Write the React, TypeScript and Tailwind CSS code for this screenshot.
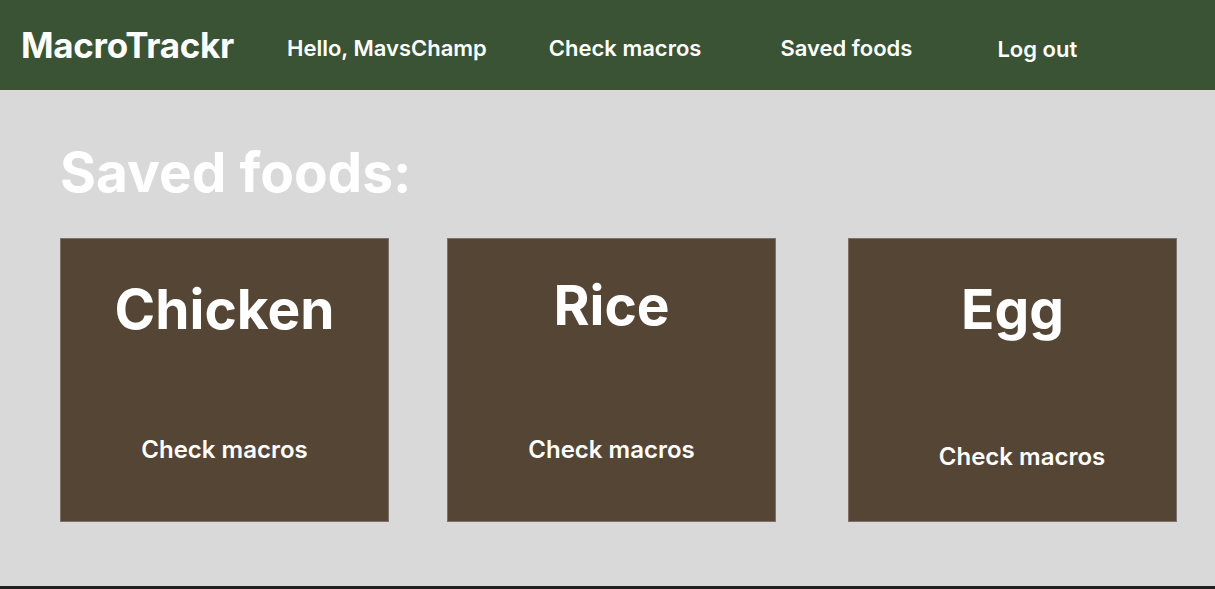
export default function App() {
  const font = { fontFamily: "Inter, 'Noto Sans', sans-serif" };

  return (
    <main className="flex h-[589px] w-full flex-col bg-[#d9d9d9]" style={font}>

      {/* Header */}

      <header className="flex h-[90px] shrink-0 items-center bg-[#3a5335] text-white">

        <div className="ml-[21px] text-[35px] font-bold tracking-[-0.3px]">
          MacroTrackr
        </div>

        <div className="ml-[53px] mt-[6px] text-[22px] font-semibold">
          Hello, MavsChamp
        </div>

        <div className="ml-[62px] mt-[6px] text-[22px] font-semibold">
          Check macros
        </div>

        <div className="ml-[79px] mt-[6px] text-[22px] font-semibold">
          Saved foods
        </div>

        <div className="ml-[85px] mt-[9px] text-[22px] font-semibold">
          Log out
        </div>

      </header>

      {/* Saved foods */}

      <section className="flex-1 pl-[60px]">

        <h1 className="mt-[55px] text-[55px] font-bold leading-none text-white">
          Saved foods:
        </h1>

        <div className="mt-[38px] flex">

          <FoodCard name="Chicken" titleTop="pt-[35px]" actionTop="mt-[88px]" />

          <FoodCard name="Rice" titleTop="pt-[31px]" actionTop="mt-[92px]" className="ml-[58px]" />

          <FoodCard name="Egg" titleTop="pt-[35px]" actionTop="mt-[95px]" className="ml-[72px]" actionShift="ml-[19px]" />

        </div>

      </section>

      <div className="h-[3px] shrink-0 bg-[#202020]" />

    </main>
  );
}

function FoodCard({
  name,
  titleTop,
  actionTop,
  className = "",
  actionShift = "",
}: {
  name: string;
  titleTop: string;
  actionTop: string;
  className?: string;
  actionShift?: string;
}) {
  return (
    <div
      className={`flex h-[284px] w-[329px] flex-col items-center border border-[#7d7068] bg-[#554535] text-white ${titleTop} ${className}`}
    >
      <div className="text-[55px] font-bold leading-[70px]">
        {name}
      </div>

      <div className={`text-[24px] font-semibold ${actionTop} ${actionShift}`}>
        Check macros
      </div>
    </div>
  );
}
